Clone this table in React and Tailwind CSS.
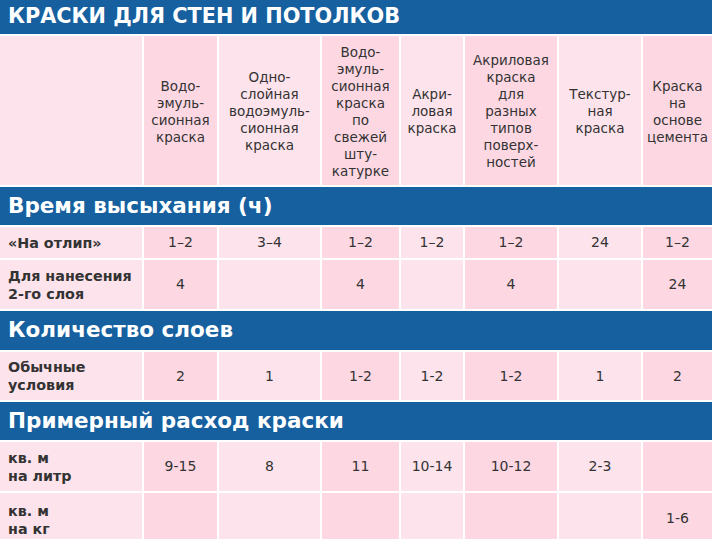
const cols = "grid grid-cols-[142px_73px_101px_77px_62px_92px_82px_1fr] gap-[2px]";

const heads = [
  ["Водо-", "эмуль-", "сионная", "краска"],
  ["Одно-", "слойная", "водоэмуль-", "сионная", "краска"],
  ["Водо-", "эмуль-", "сионная", "краска", "по", "свежей", "шту-", "катурке"],
  ["Акри-", "ловая", "краска"],
  ["Акриловая", "краска", "для", "разных", "типов", "поверх-", "ностей"],
  ["Текстур-", "ная", "краска"],
  ["Краска", "на", "основе", "цемента"],
];

const sections = [
  {
    title: "Время высыхания (ч)",
    h: "h-[38px]",
    rows: [
      { label: ["«На отлип»"], h: "h-[31px]", vals: ["1–2", "3–4", "1–2", "1–2", "1–2", "24", "1–2"] },
      { label: ["Для нанесения", "2-го слоя"], h: "h-[49px]", vals: ["4", "", "4", "", "4", "", "24"] },
    ],
  },
  {
    title: "Количество слоев",
    h: "h-[39px]",
    rows: [
      { label: ["Обычные", "условия"], h: "h-[48px]", vals: ["2", "1", "1-2", "1-2", "1-2", "1", "2"] },
    ],
  },
  {
    title: "Примерный расход краски",
    h: "h-[38px]",
    rows: [
      { label: ["кв. м", "на литр"], h: "h-[49px]", vals: ["9-15", "8", "11", "10-14", "10-12", "2-3", ""] },
      { label: ["кв. м", "на кг"], h: "h-[50px]", vals: ["", "", "", "", "", "", "1-6"], labelPad: "pt-[4px]" },
    ],
  },
];

function cellBg(i) {
  return i % 2 === 0 ? "bg-[#fdd8e3]" : "bg-[#fde3eb]";
}

export default function App() {
  return (
    <div className="w-[712px] h-[539px] overflow-hidden bg-white text-[#333] font-['DejaVu_Sans',Verdana,sans-serif]">
      <div className="flex flex-col gap-[2px]">
        <div className="h-[34px] bg-[#1660a0] text-white font-bold text-[20.8px] flex items-center px-2">
          КРАСКИ ДЛЯ СТЕН И ПОТОЛКОВ
        </div>

        <div className={cols + " h-[149px]"}>
          <div className="bg-[#fde3eb]" />
          {heads.map((lines, i) => (
            <div key={i} className={cellBg(i) + " flex flex-col items-center justify-center text-center text-[13.5px] leading-[17px] pt-[2px]"}>
              {lines.map((l, j) => (
                <span key={j}>{l}</span>
              ))}
            </div>
          ))}
        </div>

        {sections.map((s, si) => (
          <div key={si} className="flex flex-col gap-[2px]">
            <div className={s.h + " bg-[#1660a0] text-white font-bold text-[21.5px] flex items-center px-2"}>
              {s.title}
            </div>
            {s.rows.map((r, ri) => (
              <div key={ri} className={cols + " " + r.h}>
                <div className={"bg-[#fde3eb] flex flex-col justify-center px-2 font-bold text-[14.3px] leading-[18px] " + (r.labelPad || "")}>
                  {r.label.map((l, j) => (
                    <span key={j}>{l}</span>
                  ))}
                </div>
                {r.vals.map((v, i) => (
                  <div key={i} className={cellBg(i) + " flex items-center justify-center text-[14px]"}>
                    {v}
                  </div>
                ))}
              </div>
            ))}
          </div>
        ))}
      </div>
    </div>
  );
}
